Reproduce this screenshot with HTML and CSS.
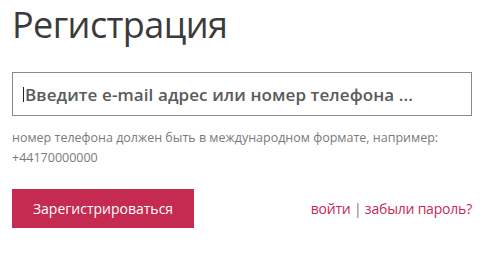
FILE: index.html
```html
<!DOCTYPE html>
<html lang="ru">
<head>
<meta charset="utf-8">
<link rel="stylesheet" href="styles.css">
</head>
<body>
<div class="page">
  <h1 class="title">Регистрация</h1>
  <div class="field">
    <span class="caret"></span>
    <span class="placeholder">Введите e-mail адрес или номер телефона ...</span>
  </div>
  <p class="hint">номер телефона должен быть в международном формате, например:<br>+44170000000</p>
  <div class="actions">
    <button class="btn">Зарегистрироваться</button>
    <div class="links"><a class="link">войти</a> <span class="sep">|</span> <a class="link">забыли пароль?</a></div>
  </div>
</div>
</body>
</html>
```
FILE: styles.css
```css
html, body { margin: 0; padding: 0; background: #fff; }
body { font-family: "Open Sans", "Noto Sans", sans-serif; }
.page { padding: 0 23px 0 12px; width: 460px; }
.title {
  margin: 0;
  padding-top: 2px;
  font-weight: 400;
  font-size: 36px;
  line-height: 46px;
  color: #3b3b3b;
  letter-spacing: -0.6px;
}
.field {
  margin-top: 24px;
  height: 42px;
  border: 1px solid #8a8a8a;
  display: flex;
  align-items: center;
  padding-left: 10px;
}
.caret { width: 1px; height: 15px; background: #222; margin-right: 1px; }
.placeholder { font-size: 17px; font-weight: 600; color: #5a5a5a; letter-spacing: 0.1px; }
.hint {
  margin: 12px 0 0;
  font-size: 12.5px;
  line-height: 20px;
  color: #7a7a7a;
}
.actions {
  margin-top: 21px;
  display: flex;
  align-items: center;
  justify-content: space-between;
}
.btn {
  width: 182px;
  height: 39px;
  border: 0;
  background: #c52a50;
  color: #fff;
  font-family: inherit;
  font-size: 14px;
  padding: 0;
}
.links { font-size: 14px; color: #c8285a; letter-spacing: -0.2px; }
.sep { color: #8a6f80; }
.link { color: #c8285a; }
```
